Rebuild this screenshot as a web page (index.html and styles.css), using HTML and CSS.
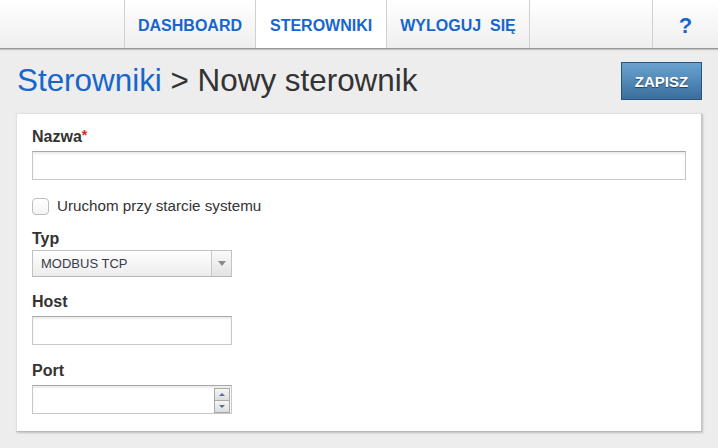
FILE: index.html
```html
<!DOCTYPE html>
<html lang="pl">
<head>
<meta charset="utf-8">
<title>Nowy sterownik</title>
<link rel="stylesheet" href="styles.css">
</head>
<body>
<header class="topbar">
  <nav class="nav">
    <a class="nav-item" href="#">DASHBOARD</a>
    <a class="nav-item active" href="#">STEROWNIKI</a>
    <a class="nav-item" href="#">WYLOGUJ&nbsp; SIĘ</a>
    <span class="nav-spacer"></span>
    <a class="nav-help" href="#">?</a>
  </nav>
</header>
<div class="title-row">
  <h1 class="title"><a href="#">Sterowniki</a> &gt; Nowy sterownik</h1>
  <button class="btn-save" type="button">ZAPISZ</button>
</div>
<main class="panel">
  <div class="field field-name">
    <label class="label">Nazwa<span class="req">*</span></label>
    <input class="input input-wide" type="text">
  </div>
  <label class="check-row">
    <span class="checkbox"></span>
    <span class="check-text">Uruchom przy starcie systemu</span>
  </label>
  <div class="field field-type">
    <label class="label">Typ</label>
    <div class="select">
      <span class="select-value">MODBUS TCP</span>
      <span class="select-arrow"><span class="tri-down"></span></span>
    </div>
  </div>
  <div class="field field-host">
    <label class="label">Host</label>
    <input class="input input-narrow" type="text">
  </div>
  <div class="field field-port">
    <label class="label">Port</label>
    <div class="spin-input">
      <input class="spin-field" type="text">
      <div class="spinner">
        <span class="spin-btn"><span class="tri-up-s"></span></span>
        <span class="spin-btn"><span class="tri-down-s"></span></span>
      </div>
    </div>
  </div>
</main>
</body>
</html>
```
FILE: styles.css
```css
* { box-sizing: border-box; }
html, body { margin: 0; padding: 0; }
body {
  background: #ededed;
  font-family: "Liberation Sans", Arial, sans-serif;
  color: #333;
  width: 718px;
  height: 448px;
  overflow: hidden;
}
a { text-decoration: none; }

.topbar {
  height: 49px;
  background: linear-gradient(#ffffff, #efefef);
  border-bottom: 1px solid #9a9a9a;
  box-shadow: 0 1px 1px rgba(0,0,0,0.18);
  position: relative;
  z-index: 1;
}
.nav {
  display: flex;
  height: 48px;
  padding-left: 124px;
}
.nav-item {
  display: block;
  height: 48px;
  padding: 4px 13px 0 13px;
  line-height: 44px;
  border-left: 1px solid #d0d0d0;
  font-size: 16px;
  font-weight: bold;
  color: #1766cc;
  white-space: nowrap;
}
.nav-item.active { background: #ffffff; padding: 4px 14px 0 14px; }
.nav-spacer {
  flex: 1;
  border-left: 1px solid #d0d0d0;
}
.nav-help {
  width: 66px;
  height: 48px;
  border-left: 1px solid #d0d0d0;
  text-align: center;
  padding-top: 4px;
  line-height: 44px;
  font-size: 22px;
  font-weight: bold;
  color: #1766cc;
}

.title-row {
  height: 64px;
  display: flex;
  align-items: center;
  justify-content: space-between;
  padding: 0 16px 0 17px;
}
.title {
  margin: 0;
  font-size: 31.4px;
  line-height: 32px;
  font-weight: normal;
  color: #333;
  white-space: nowrap;
}
.title a { color: #1766cc; }
.btn-save {
  width: 81px;
  height: 38px;
  border: 1px solid #25557e;
  background: linear-gradient(#6aa3cf, #3a6e9d);
  color: #fff;
  font-family: "Liberation Sans", Arial, sans-serif;
  font-size: 15px;
  font-weight: bold;
  text-shadow: 0 1px 1px rgba(0,0,0,0.5);
  padding: 0;
}

.panel {
  margin: 0 16px 0 16px;
  width: 686px;
  height: 319px;
  background: #fff;
  border: 1px solid #e0e0e0;
  border-right-color: #c4c4c4;
  border-bottom-color: #b8b8b8;
  box-shadow: 1px 1px 2px rgba(0,0,0,0.2);
  padding: 13px 15px 0 15px;
}
.label {
  display: block;
  font-size: 16px;
  line-height: 20px;
  font-weight: bold;
  color: #333;
  margin-bottom: 4px;
}
.req { color: #e0261c; font-weight: bold; font-size: 14px; vertical-align: top; line-height: 16px; }

.input {
  display: block;
  height: 29px;
  border: 1px solid #c8c8c8;
  border-top-color: #a8a8a8;
  box-shadow: inset 0 2px 2px rgba(0,0,0,0.08);
  background: #fff;
  margin: 0;
  padding: 0 6px;
  font-family: inherit;
}
.input-wide { width: 654px; }
.input-narrow { width: 200px; }

.field-name { margin-bottom: 17px; }

.check-row {
  display: flex;
  align-items: center;
  height: 18px;
  margin-bottom: 14px;
}
.checkbox {
  width: 17px;
  height: 17px;
  border: 1px solid #bdbdbd;
  border-radius: 4px;
  background: linear-gradient(#ffffff, #f4f4f4);
  margin-right: 8px;
}
.check-text {
  font-size: 15.2px;
  color: #333;
  line-height: 18px;
}

.field-type .label { margin-bottom: 1px; }
.field-type { margin-bottom: 15px; }
.select {
  display: flex;
  width: 200px;
  height: 27px;
  border: 1px solid #c2c2c2;
  border-bottom-color: #b8b8b8;
  background: linear-gradient(#ffffff, #ececec);
}
.select-value {
  flex: 1;
  font-size: 13px;
  line-height: 25px;
  padding-left: 8px;
  color: #3a3a48;
}
.select-arrow {
  width: 20px;
  border-left: 1px solid #c8c8c8;
  background: linear-gradient(#fafafa, #e2e2e2);
  display: flex;
  align-items: center;
  justify-content: center;
}
.tri-down {
  width: 0;
  height: 0;
  border-left: 4px solid transparent;
  border-right: 4px solid transparent;
  border-top: 5px solid #8a8a8a;
}

.field-host { margin-bottom: 16px; }

.spin-input {
  display: flex;
  align-items: center;
  width: 200px;
  height: 29px;
  border: 1px solid #c8c8c8;
  border-top-color: #a8a8a8;
  box-shadow: inset 0 2px 2px rgba(0,0,0,0.08);
  background: #fff;
  padding-right: 1px;
}
.spin-field {
  flex: 1;
  min-width: 0;
  height: 27px;
  border: 0;
  background: transparent;
  padding: 0 6px;
  outline: none;
}
.spinner {
  width: 16px;
  height: 25px;
  display: flex;
  flex-direction: column;
  border: 1px solid #a9a9a9;
  margin-top: 1px;
}
.spin-btn {
  flex: 1;
  display: flex;
  align-items: center;
  justify-content: center;
  background: linear-gradient(#f6f6f6, #dcdcdc);
}
.spin-btn + .spin-btn { border-top: 1px solid #a9a9a9; }
.tri-up-s {
  width: 0; height: 0;
  border-left: 3px solid transparent;
  border-right: 3px solid transparent;
  border-bottom: 3px solid #5a6aa0;
}
.tri-down-s {
  width: 0; height: 0;
  border-left: 3px solid transparent;
  border-right: 3px solid transparent;
  border-top: 3px solid #5a6aa0;
}
```
